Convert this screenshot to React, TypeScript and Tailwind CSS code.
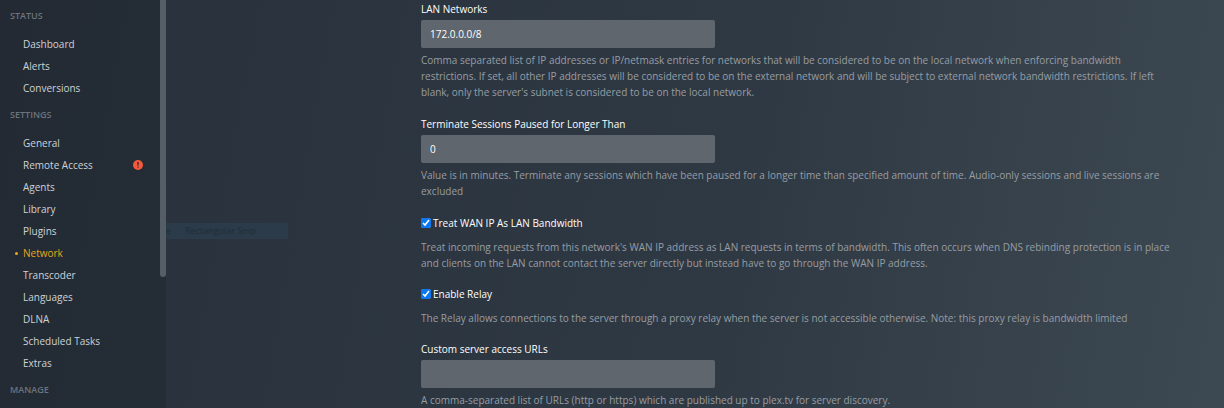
import { useState } from "react";

const sections = [
  { title: "Status", items: ["Dashboard", "Alerts", "Conversions"] },
  {
    title: "Settings",
    items: [
      "General",
      "Remote Access",
      "Agents",
      "Library",
      "Plugins",
      "Network",
      "Transcoder",
      "Languages",
      "DLNA",
      "Scheduled Tasks",
      "Extras",
    ],
  },
  { title: "Manage", items: [] },
];

function AlertIcon() {
  return (
    <svg viewBox="0 0 10 10" className="size-2.5" role="img" aria-label="Attention needed">
      <circle cx="5" cy="5" r="5" fill="#f4593b" />
      <path d="M4.2 2h1.6l-.3 3.7h-1zM4.4 6.5h1.2v1.3H4.4z" fill="#3a2a2c" />
    </svg>
  );
}

function Sidebar() {
  return (
    <nav className="relative w-[166px] shrink-0 overflow-hidden bg-[#1c242c]/45 pt-1.5">
      {sections.map((section) => (
        <section key={section.title} className="mb-1.5">
          <h2 className="mb-[7px] pl-2.5 text-[9px] leading-5 font-semibold text-[#6c747d] uppercase">
            {section.title}
          </h2>
          <ul>
            {section.items.map((item) => {
              const active = item === "Network";
              return (
                <li key={item}>
                  <a
                    href="#"
                    aria-current={active ? "page" : undefined}
                    className={
                      active
                        ? "flex h-[22px] items-center pr-[23px] font-medium text-[#e5a91b]"
                        : "flex h-[22px] items-center pr-[23px] font-medium text-[#ced2d6]"
                    }
                  >
                    <span className="flex w-[23px] justify-center pl-2.5">
                      {active && <span className="size-[3px] rounded-full bg-[#e5a91b]" />}
                    </span>
                    <span className="flex-1">{item}</span>
                    {item === "Remote Access" && <AlertIcon />}
                  </a>
                </li>
              );
            })}
          </ul>
        </section>
      ))}
      <div className="absolute top-0 right-0 h-[277px] w-1.5 rounded-b-full bg-[#555e67]" />
    </nav>
  );
}

type TextFieldProps = { id: string; label: string; initial: string; help: string };

function TextField({ id, label, initial, help }: TextFieldProps) {
  const [value, setValue] = useState(initial);
  return (
    <div className="mb-4">
      <label htmlFor={id} className="block pb-[3px] leading-4 font-medium text-white">
        {label}
      </label>
      <input
        id={id}
        type="text"
        value={value}
        onChange={(e) => setValue(e.target.value)}
        className="block h-7 w-[294px] rounded-xs bg-[#60666e] px-[9px] font-medium text-white outline-none"
      />
      <p className="pt-1 leading-4 text-[#979da4]">{help}</p>
    </div>
  );
}

type CheckFieldProps = { id: string; label: string; help: string };

function CheckField({ id, label, help }: CheckFieldProps) {
  const [checked, setChecked] = useState(true);
  return (
    <div className="mb-[15px]">
      <div className="flex items-center gap-0.5 pb-2">
        <input
          id={id}
          type="checkbox"
          checked={checked}
          onChange={(e) => setChecked(e.target.checked)}
          className="size-2.5 accent-[#0b76ef]"
        />
        <label htmlFor={id} className="leading-4 font-medium text-white">
          {label}
        </label>
      </div>
      <p className="leading-4 text-[#979da4]">{help}</p>
    </div>
  );
}

export default function App() {
  return (
    <div className="relative flex h-screen overflow-hidden bg-linear-100 from-[#28313b] via-[#2f3943] via-60% to-[#3d4952] font-['Open_Sans',sans-serif] text-[10px]">
      <Sidebar />
      <div
        aria-hidden="true"
        className="absolute top-[223px] left-[166px] flex h-4 w-[122px] items-center gap-3.5 bg-[#2b3b49] text-[9px] text-[#1f2d3a]"
      >
        <span>e</span>
        <span>Rectangular Snip</span>
      </div>
      <main className="min-w-0 flex-1 pt-px pr-12 pl-[255px]">
        <TextField
          id="lan-networks"
          label="LAN Networks"
          initial="172.0.0.0/8"
          help="Comma separated list of IP addresses or IP/netmask entries for networks that will be considered to be on the local network when enforcing bandwidth restrictions. If set, all other IP addresses will be considered to be on the external network and will be subject to external network bandwidth restrictions. If left blank, only the server's subnet is considered to be on the local network."
        />
        <TextField
          id="terminate-sessions"
          label="Terminate Sessions Paused for Longer Than"
          initial="0"
          help="Value is in minutes. Terminate any sessions which have been paused for a longer time than specified amount of time. Audio-only sessions and live sessions are excluded"
        />
        <CheckField
          id="wan-as-lan"
          label="Treat WAN IP As LAN Bandwidth"
          help="Treat incoming requests from this network's WAN IP address as LAN requests in terms of bandwidth. This often occurs when DNS rebinding protection is in place and clients on the LAN cannot contact the server directly but instead have to go through the WAN IP address."
        />
        <CheckField
          id="enable-relay"
          label="Enable Relay"
          help="The Relay allows connections to the server through a proxy relay when the server is not accessible otherwise. Note: this proxy relay is bandwidth limited"
        />
        <TextField
          id="custom-urls"
          label="Custom server access URLs"
          initial=""
          help="A comma-separated list of URLs (http or https) which are published up to plex.tv for server discovery."
        />
      </main>
    </div>
  );
}
